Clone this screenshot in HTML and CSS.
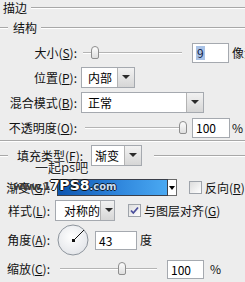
FILE: index.html
```html
<!DOCTYPE html>
<html lang="zh-CN">
<head>
    <meta charset="UTF-8">
    <title>描边</title>
    <link rel="stylesheet" href="styles.css">
</head>
<body>
<div class="dlg">
    <div class="title"><span>描边</span><i class="rule"></i></div>

    <div class="grphead"><i class="lead"></i><span class="gname">结构</span><i class="rule"></i></div>
    <div class="row up">
        <label class="lbl">大小(<u>S</u>):</label>
        <div class="slider s-size"><span class="thumb" style="left:8px"></span></div>
        <div class="field f-size"><span class="hl">9</span></div>
        <span class="unit u-size">像素</span>
    </div>
    <div class="row up">
        <label class="lbl">位置(<u>P</u>):</label>
        <div class="select s-pos"><span class="val">内部</span><span class="arrow"></span></div>
    </div>
    <div class="row up">
        <label class="lbl">混合模式(<u>B</u>):</label>
        <div class="select s-blend"><span class="val">正常</span><span class="arrow"></span></div>
    </div>
    <div class="row up">
        <label class="lbl">不透明度(<u>O</u>):</label>
        <div class="slider s-opa"><span class="thumb" style="left:94px"></span></div>
        <div class="field f-opa">100</div>
        <span class="unit u-opa">%</span>
    </div>
    <div class="sep"></div>

    <div class="fillhead">
        <i class="lead"></i>
        <label class="flbl">填充类型(<u>F</u>):</label>
        <div class="select s-fill"><span class="val">渐变</span><span class="arrow"></span></div>
        <i class="rule"></i>
    </div>
    <div class="row lo r-grad">
        <label class="lbl">渐变(<u>G</u>):</label>
        <div class="grad"></div>
        <div class="gbtn"><span class="tri"></span></div>
        <span class="check c-rev"></span>
        <span class="ctext">反向(<u>R</u>)</span>
    </div>
    <div class="row lo r-style">
        <label class="lbl">样式(<u>L</u>):</label>
        <div class="select s-style"><span class="val">对称的</span><span class="arrow"></span></div>
        <span class="check c-align on">
            <svg width="11" height="11" viewBox="0 0 11 11"><path d="M2 5.5 L4.3 8 L9 2.5" fill="none" stroke="#4b4f9c" stroke-width="1.8"/></svg>
        </span>
        <span class="ctext">与图层对齐(<u>G</u>)</span>
    </div>
    <div class="row lo r-angle">
        <label class="lbl">角度(<u>A</u>):</label>
        <div class="dial">
            <svg width="32" height="32" viewBox="0 0 32 32">
                <defs>
                    <radialGradient id="df" cx="45%" cy="40%" r="60%">
                        <stop offset="0" stop-color="#ffffff"/>
                        <stop offset="1" stop-color="#e4e6ea"/>
                    </radialGradient>
                </defs>
                <circle cx="16" cy="16" r="15" fill="url(#df)" stroke="#8d949c" stroke-width="1"/>
                <line x1="16.5" y1="16.5" x2="27" y2="6" stroke="#111" stroke-width="1"/>
                <rect x="15" y="15" width="3" height="3" fill="#111"/>
            </svg>
        </div>
        <div class="field f-angle">43</div>
        <span class="unit u-angle">度</span>
    </div>
    <div class="row lo r-scale">
        <label class="lbl">缩放(<u>C</u>):</label>
        <div class="slider s-scale"><span class="thumb" style="left:58px"></span></div>
        <div class="field f-scale">100</div>
        <span class="unit u-scale">%</span>
    </div>

    <div class="wm1">一起ps吧</div>
    <div class="wm2"><span class="wa">www.1</span><span class="wb">7PS8</span><span class="wc">.com</span></div>
</div>
</body>
</html>
```

FILE: styles.css
```css
body{
    margin:0;
    background-color:#ededed;
}
.dlg{
    position:relative;
    width:245px;
    height:282px;
    overflow:hidden;
    font-family:"Noto Sans CJK SC","Noto Sans",sans-serif;
    font-size:12px;
    line-height:14px;
    color:#111;
}
u{
    text-underline-offset:1px;
}
.rule{
    display:block;
    flex:1;
    height:0;
    border-top:1px solid #a8a8a8;
    border-bottom:1px solid #ffffff;
}
.lead{
    display:block;
    width:8px;
    height:0;
    border-top:1px solid #a8a8a8;
    border-bottom:1px solid #ffffff;
}

/* 标题 */
.title{
    display:flex;
    align-items:center;
    height:15px;
    padding-left:3px;
}
.title span{
    margin-right:4px;
}
.grphead{
    display:flex;
    align-items:center;
    height:25px;
}
.gname{
    margin:0 4px 0 5px;
}

/* 行 */
.row{
    display:flex;
    align-items:center;
    height:25px;
    white-space:nowrap;
}
.lbl{
    flex:none;
    text-align:right;
}
.up .lbl{
    width:77px;
}
.lo .lbl{
    width:50px;
}

.sep{
    margin-top:0px;
    height:0;
    border-top:1px solid #a8a8a8;
    border-bottom:1px solid #ffffff;
}

/* 滑块 */
.slider{
    position:relative;
    flex:none;
    height:14px;
}
.slider:before{
    content:"";
    position:absolute;
    left:0;
    right:0;
    top:6px;
    border-top:1px solid #b4b4b4;
    border-bottom:1px solid #ffffff;
}
.thumb{
    position:absolute;
    top:0;
    width:8px;
    height:13px;
    box-sizing:border-box;
    border:1px solid #8e8e8e;
    border-radius:4px 4px 2px 2px;
    background:linear-gradient(#fdfdfd,#dedede);
}
.s-size{ margin-left:6px; width:99px; }
.s-opa{ margin-left:8px; width:97px; }
.s-scale{ margin-left:10px; width:97px; }

/* 输入框 */
.field{
    flex:none;
    box-sizing:border-box;
    height:20px;
    padding:2px 0 0 3px;
    border:1px solid #a5a9af;
    background-color:#fff;
    color:#000;
}
.hl{
    display:inline-block;
    padding:0 1px;
    background-color:#a9c2e6;
    color:#14244a;
}
.f-size{ margin-left:10px; width:37px; }
.f-opa{ margin-left:10px; width:38px; }
.f-angle{ margin-left:6px; width:42px; height:19px; }
.f-scale{ margin-left:10px; width:37px; height:19px; }
.unit{
    flex:none;
}
.u-size{ margin-left:3px; }
.u-opa{ margin-left:2px; }
.u-angle{ margin-left:3px; }
.u-scale{ margin-left:6px; }

/* 下拉框 */
.select{
    flex:none;
    display:flex;
    box-sizing:border-box;
    height:21px;
    border:1px solid #a5a9af;
    background-color:#fff;
}
.select .val{
    flex:1;
    padding:3px 0 0 6px;
    color:#000;
}
.select .arrow{
    position:relative;
    width:16px;
    border-left:1px solid #b3b3b3;
    background:linear-gradient(#f2f2f2,#d6d6d6);
}
.select .arrow:after{
    content:"";
    position:absolute;
    left:4px;
    top:7px;
    border-left:4px solid transparent;
    border-right:4px solid transparent;
    border-top:4px solid #2a2a2a;
}
.s-pos{ margin-left:4px; width:54px; }
.s-blend{ margin-left:4px; width:123px; }
.s-fill{ margin-left:8px; width:51px; }
.s-fill .val{ padding-left:3px; }
.s-style{ margin-left:5px; width:60px; }
.s-style .val{ padding-left:8px; }

/* 填充类型 */
.fillhead{
    display:flex;
    align-items:center;
    height:27px;
    white-space:nowrap;
}
.flbl{
    margin-left:9px;
    width:66px;
    flex:none;
}
.fillhead .rule{
    margin-left:12px;
}

.r-grad{
    margin-top:8px;
    height:21px;
}
.grad{
    flex:none;
    margin-left:7px;
    width:111px;
    height:17px;
    box-sizing:border-box;
    border:1px solid #3a3f4a;
    background:linear-gradient(to right,#0d55b0,#2f86dc 55%,#4aa9f2);
}
.gbtn{
    position:relative;
    flex:none;
    width:9px;
    height:17px;
    box-sizing:border-box;
    border:1px solid #6a6a6a;
    border-left:none;
    background-color:#fff;
}
.tri{
    position:absolute;
    left:1px;
    top:6px;
    border-left:3px solid transparent;
    border-right:3px solid transparent;
    border-top:4px solid #000;
}
.check{
    flex:none;
    display:flex;
    align-items:center;
    justify-content:center;
    width:13px;
    height:13px;
    box-sizing:border-box;
    border:1px solid #9ea3aa;
    background:linear-gradient(135deg,#dcdcdc,#ffffff);
}
.c-rev{ margin-left:12px; }
.c-align{ margin-left:13px; }
.ctext{
    margin-left:3px;
}
.r-style{
    margin-top:2px;
    height:21px;
}
.r-angle{
    margin-top:2px;
    height:34px;
}
.dial{
    flex:none;
    margin-left:7px;
    width:32px;
    height:32px;
}
.r-scale{
    height:24px;
}

/* 水印 */
.wm1{
    position:absolute;
    left:35px;
    top:159px;
    font-size:13px;
    line-height:15px;
    color:#2a2a2a;
    text-shadow:0 0 2px #fff,0 0 2px #fff;
}
.wm2{
    position:absolute;
    left:13px;
    top:177px;
    font-family:"DejaVu Sans",sans-serif;
    font-weight:bold;
    line-height:16px;
    white-space:nowrap;
}
.wa{
    font-size:11px;
    color:#3b3b3b;
    letter-spacing:-1px;
}
.wb{
    font-size:14px;
    color:#fff;
    text-shadow:1px 0 0 #111,-1px 0 0 #111,0 1px 0 #111,0 -1px 0 #111;
}
.wc{
    font-size:10px;
    color:#c8def5;
    text-shadow:1px 0 0 #123,-1px 0 0 #123,0 1px 0 #123,0 -1px 0 #123;
}
```
